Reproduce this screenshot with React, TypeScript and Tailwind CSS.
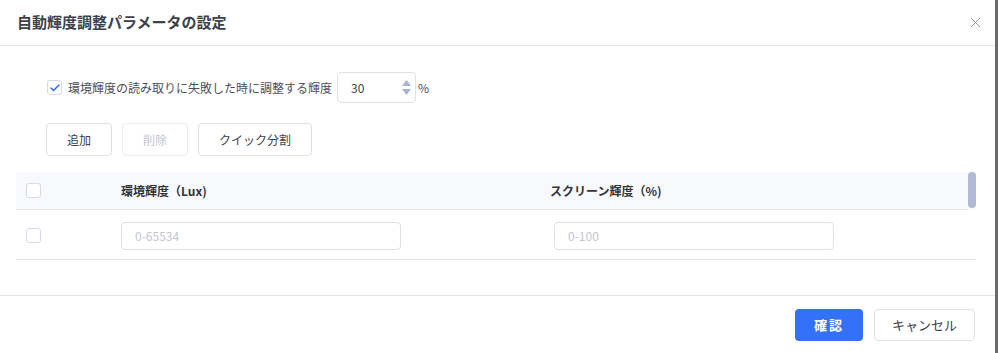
import React from 'react';
import { X, Check } from 'lucide-react';

const font = { fontFamily: '"Noto Sans CJK JP", "Noto Sans", sans-serif' };

function Box({ checked = false }: { checked?: boolean }) {
  return (
    <div className="w-[15px] h-[15px] rounded-[3px] border border-[#d5dbe8] bg-white flex items-center justify-center">
      {checked && <Check className="w-[12px] h-[12px] text-[#2f6cf6]" strokeWidth={3} />}
    </div>
  );
}

export default function App() {
  return (
    <div className="w-[998px] h-[353px] flex bg-white text-[12px] text-[#4b505c]" style={font}>
      <div className="w-[995px] h-full flex flex-col">
        {/* Header */}
        <div className="h-[46px] shrink-0 flex items-center justify-between pl-[17px] pr-[11px] border-b border-[#e3e4e8]">
          <span className="text-[15px] font-semibold text-[#3d414b]">自動輝度調整パラメータの設定</span>
          <X className="w-[17px] h-[17px] text-[#8a8f99]" strokeWidth={1.3} />
        </div>

        {/* Body */}
        <div className="flex-1 px-4 pt-[26px]">
          <div className="flex items-center pl-[31px] h-[31px]">
            <Box checked />
            <span className="ml-[6px]">環境輝度の読み取りに失敗した時に調整する輝度</span>
            <div className="ml-[5px] w-[79px] h-[31px] rounded-[4px] border border-[#dde0e7] flex items-center pl-[13px] pr-[4px] text-[#3d414b]">
              <span className="flex-1">30</span>
              <div className="flex flex-col items-center gap-[3px]">
                <svg width="9" height="6" viewBox="0 0 9 6"><path d="M4.5 0 L9 6 L0 6 Z" fill="#a9b3cc" /></svg>
                <svg width="9" height="6" viewBox="0 0 9 6"><path d="M0 0 L9 0 L4.5 6 Z" fill="#a9b3cc" /></svg>
              </div>
            </div>
            <span className="ml-[2px]">%</span>
          </div>

          <div className="flex items-center gap-[10px] pl-[30px] mt-[20px]">
            <button className="w-[66px] h-[33px] rounded-[4px] border border-[#dcdfe6] text-[#3d414b]">追加</button>
            <button className="w-[66px] h-[33px] rounded-[4px] border border-[#eceef2] text-[#c3c6cd]">削除</button>
            <button className="w-[114px] h-[33px] rounded-[4px] border border-[#dcdfe6] text-[#3d414b]">クイック分割</button>
          </div>

          {/* Table */}
          <div className="mt-[16px] w-[960px]">
            <div className="flex">
              <div className="w-[952px] h-[38px] bg-[#f8f9fd] grid grid-cols-[105px_429px_1fr] items-center border-b border-[#e3e4e8] font-bold text-[#2f333b]">
                <div className="pl-[10px]"><Box /></div>
                <div>環境輝度（Lux)</div>
                <div>スクリーン輝度（%)</div>
              </div>
              <div className="w-[8px] h-[38px] bg-[#f8f9fd]">
                <div className="w-[8px] h-[36px] rounded-full bg-[#b1b9d3]" />
              </div>
            </div>
            <div className="h-[50px] grid grid-cols-[105px_433px_1fr] items-start pt-[12px] border-b border-[#e3e4e8]">
              <div className="pl-[10px] pt-[6px]"><Box /></div>
              <div className="w-[280px] h-[28px] rounded-[4px] border border-[#dde0e7] flex items-center pl-[13px] text-[#c3c6cd]">0-65534</div>
              <div className="w-[280px] h-[28px] rounded-[4px] border border-[#dde0e7] flex items-center pl-[13px] text-[#c3c6cd]">0-100</div>
            </div>
          </div>
        </div>

        {/* Footer */}
        <div className="h-[58px] shrink-0 border-t border-[#e3e4e8] flex items-start justify-end gap-[11px] pr-[20px] pt-[13px]">
          <button className="w-[68px] h-[32px] rounded-[4px] bg-[#3471f9] text-white font-semibold text-[13px] tracking-[2px]">確認</button>
          <button className="w-[101px] h-[32px] rounded-[4px] border border-[#dcdfe6] text-[#3d414b] text-[13px]">キャンセル</button>
        </div>
      </div>
      <div className="w-[3px] h-full bg-[#6b6b6b]" />
    </div>
  );
}
